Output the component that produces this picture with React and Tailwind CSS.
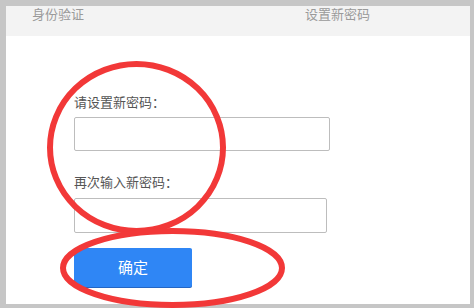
export default function App() {
  return (
    <div
      className="relative w-[474px] h-[308px] bg-[#c6c6c6] pt-[6px] pl-[6px] pr-[4px] pb-[4px] overflow-hidden"
      style={{ fontFamily: '"Liberation Sans", "Noto Sans CJK SC", sans-serif' }}
    >
      <div className="h-full bg-white flex flex-col">
        {/* step header */}
        <div className="h-[30px] bg-[#f3f3f3] flex items-start pt-[1px] pl-[26px] text-[13px] leading-[16px] text-[#9a9a9a]">
          <span className="w-[273px]">身份验证</span>
          <span>设置新密码</span>
        </div>

        <div className="flex flex-col pl-[68px] pt-[59px] text-[13px] leading-[16px] text-[#555]">
          <label>请设置新密码：</label>
          <input
            type="password"
            className="mt-[6px] w-[256px] h-[34px] border border-[#bdbdbd] rounded-[2px] outline-none"
          />
          <label className="mt-[24px]">再次输入新密码：</label>
          <input
            type="password"
            className="mt-[7px] w-[253px] h-[35px] border border-[#bdbdbd] rounded-[2px] outline-none"
          />
          <button className="mt-[15px] w-[118px] h-[39px] bg-[#2f86f5] text-white text-[15px] rounded-[2px] shadow-[0_1px_0_#2466c4]">
            确定
          </button>
        </div>
      </div>

      {/* red annotation marks */}
      <svg className="absolute left-0 top-0 pointer-events-none" width="474" height="308">
        <ellipse cx="136.5" cy="147.5" rx="86.5" ry="83.5" fill="none" stroke="#f23838" strokeWidth="6" />
        <ellipse cx="172.5" cy="268" rx="109.5" ry="37" fill="none" stroke="#f23838" strokeWidth="6" />
      </svg>
    </div>
  );
}
